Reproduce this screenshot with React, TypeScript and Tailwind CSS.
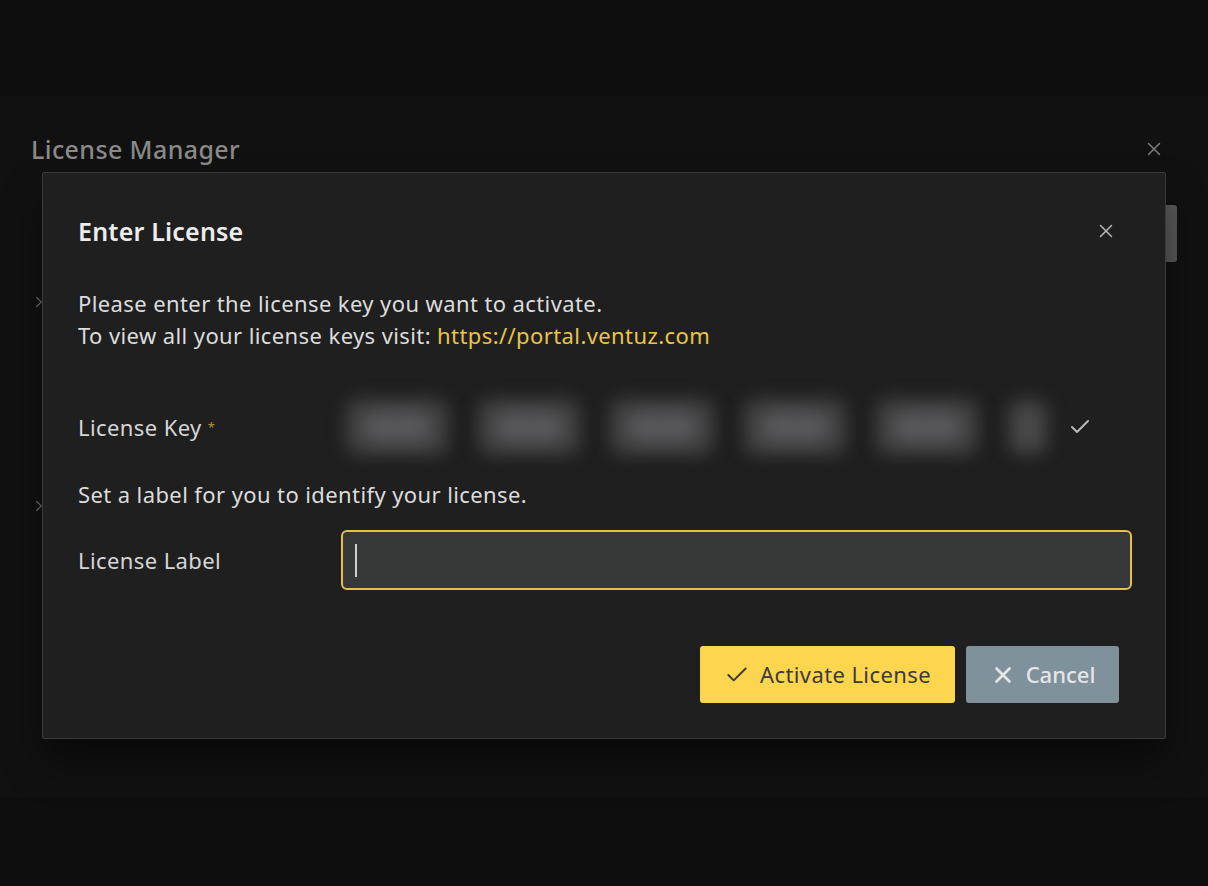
import { Check, X, ChevronRight } from "lucide-react";

const font = { fontFamily: '"Noto Sans", "Open Sans", sans-serif' };

const KeyBlobs = () => {
  const widths = [110, 110, 112, 110, 110, 48];
  return (
    <div className="flex items-center gap-[22px]">
      {widths.map((w, i) => (
        <div key={i} className="relative h-[64px]" style={{ width: w }}>
          <div className="absolute inset-[3px] rounded-[16px] bg-[#3f3f40] blur-[8px]" />
          <div className="absolute inset-x-[20px] inset-y-[18px] rounded-full bg-[#58585a] blur-[8px]" />
        </div>
      ))}
    </div>
  );
};

export default function App() {
  return (
    <div
      className="relative h-[886px] w-[1208px] overflow-hidden bg-[#0e0e0e]"
      style={font}
    >
      {/* background license manager panel */}
      <div className="mt-[96px] h-[701px] bg-[#111111]">
        <div className="flex items-center justify-between pl-[31px] pr-[43px] pt-[37px]">
          <span className="text-[25px] font-medium leading-[32px] tracking-[0.4px] text-[#8a8a8a]">
            License Manager
          </span>
          <X className="h-[22px] w-[22px] text-[#7d7d7d]" strokeWidth={1.6} />
        </div>
        <div className="flex flex-col gap-[186px] pl-[30px] pt-[128px]">
          <ChevronRight className="h-[18px] w-[18px] text-[#6a6a6a]" strokeWidth={1.8} />
          <ChevronRight className="h-[18px] w-[18px] text-[#6a6a6a]" strokeWidth={1.8} />
        </div>
      </div>
      <div className="absolute left-[1166px] top-[205px] h-[57px] w-[11px] rounded-r-[3px] bg-[#5a5a5a]" />

      {/* dialog */}
      <div className="absolute left-[42px] top-[172px] flex h-[567px] w-[1124px] flex-col rounded-[2px] border border-[#3a3a3a] bg-[#1f1f1f] pl-[35px] pt-[42px] shadow-[0_24px_40px_rgba(0,0,0,0.45)]">
        <div className="flex items-center justify-between pr-[48px]">
          <h2 className="text-[25px] font-semibold leading-[32px] tracking-[0.2px] text-[#ececec]">
            Enter License
          </h2>
          <X className="h-[22px] w-[22px] text-[#b8b8b8]" strokeWidth={1.6} />
        </div>

        <p className="mt-[40px] text-[22px] leading-[32px] tracking-[0.4px] text-[#dcdcdc]">
          Please enter the license key you want to activate.
          <br />
          To view all your license keys visit:{" "}
          <span className="text-[#e9c44b]">https://portal.ventuz.com</span>
        </p>

        <div className="mt-[44px] flex h-[64px] items-center">
          <div className="w-[264px] text-[22px] tracking-[0.4px] text-[#d6d6d6]">
            License Key <span className="relative -top-[4px] text-[13px] text-[#b8912f]">*</span>
          </div>
          <KeyBlobs />
          <Check className="ml-[16px] h-[24px] w-[24px] text-[#b9b9b9]" strokeWidth={2} />
        </div>

        <p className="mt-[19px] text-[22px] leading-[32px] tracking-[0.4px] text-[#dcdcdc]">
          Set a label for you to identify your license.
        </p>

        <div className="mt-[20px] flex items-center pr-[33px]">
          <div className="w-[263px] text-[22px] tracking-[0.4px] text-[#d6d6d6]">License Label</div>
          <div className="flex h-[60px] flex-1 items-center rounded-[6px] border-2 border-[#e5c04c] bg-[#363737] pl-[12px]">
            <div className="h-[33px] w-[2px] bg-[#d0d0d0]" />
          </div>
        </div>

        <div className="mt-[56px] flex justify-end gap-[11px] pr-[46px]">
          <button className="flex h-[57px] w-[255px] items-center justify-center gap-[10px] rounded-[3px] bg-[#fdd54f] text-[22px] tracking-[0.4px] text-[#3b3b3b]">
            <Check className="h-[26px] w-[26px]" strokeWidth={1.8} />
            Activate License
          </button>
          <button className="flex h-[57px] w-[153px] items-center justify-center gap-[10px] rounded-[3px] bg-[#7f929b] text-[22px] font-medium text-[#e4e6e8]">
            <X className="h-[26px] w-[26px]" strokeWidth={2.4} />
            Cancel
          </button>
        </div>
      </div>
    </div>
  );
}
